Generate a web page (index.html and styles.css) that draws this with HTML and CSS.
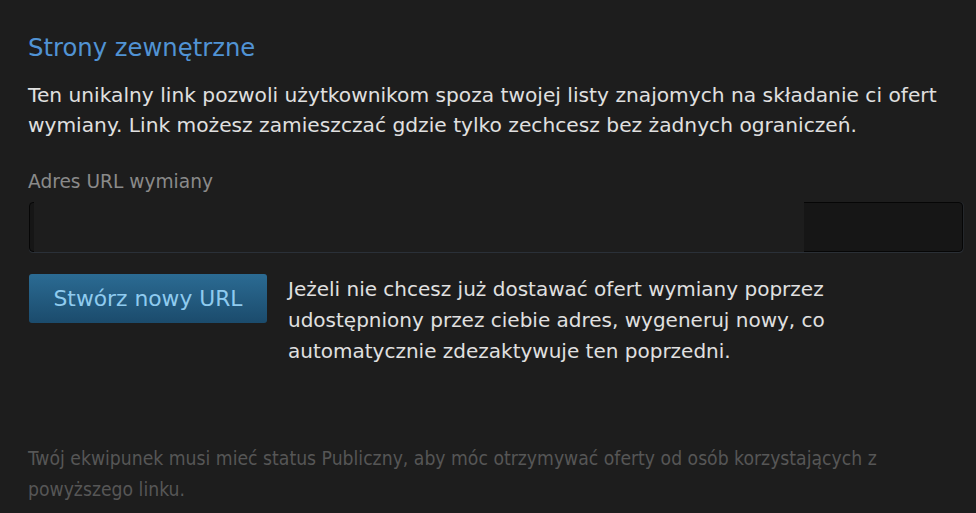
FILE: index.html
```html
<!DOCTYPE html>
<html lang="pl">
<head>
<meta charset="utf-8">
<title>Strony zewnętrzne</title>
<link rel="stylesheet" href="styles.css">
</head>
<body>
<div class="page">
  <h2 class="title">Strony zewnętrzne</h2>
  <p class="desc">Ten unikalny link pozwoli użytkownikom spoza twojej listy znajomych na składanie ci ofert wymiany. Link możesz zamieszczać gdzie tylko zechcesz bez żadnych ograniczeń.</p>
  <div class="label">Adres URL wymiany</div>
  <div class="field">
    <div class="input"></div>
    <div class="cover"></div>
  </div>
  <div class="row">
    <button class="btn">Stwórz nowy URL</button>
    <p class="note">Jeżeli nie chcesz już dostawać ofert wymiany poprzez udostępniony przez ciebie adres, wygeneruj nowy, co automatycznie zdezaktywuje ten poprzedni.</p>
  </div>
  <p class="foot">Twój ekwipunek musi mieć status Publiczny, aby móc otrzymywać oferty od osób korzystających z powyższego linku.</p>
</div>
</body>
</html>
```
FILE: styles.css
```css
html, body {
  margin: 0;
  padding: 0;
  background: #1d1d1d;
}
.page {
  padding: 30px 13px 0 28px;
  font-family: "DejaVu Sans", "Noto Sans", sans-serif;
}
.title {
  margin: 0;
  font-weight: normal;
  font-size: 24.3px;
  line-height: 36px;
  color: #5193d4;
}
.desc {
  margin: 14px 0 0;
  width: 935px;
  font-size: 20.2px;
  line-height: 30px;
  color: #e0e0e0;
}
.label {
  margin-top: 30px;
  font-size: 18.6px;
  line-height: 24px;
  color: #8a8a8a;
}
.field {
  position: relative;
  margin-top: 8px;
  height: 50px;
}
.input {
  height: 48px;
  margin-left: 1px;
  border: 1px solid #060606;
  border-radius: 4px;
  background: #161616;
  box-shadow: 0 1px 0 #2a2f35, 1px 0 0 #24272b;
}
.cover {
  position: absolute;
  left: 6px;
  top: 0;
  width: 770px;
  height: 50px;
  background: #1d1d1d;
  border-bottom: 1px solid #2a3038;
}
.row {
  display: flex;
  align-items: flex-start;
  gap: 21px;
  margin-top: 22px;
}
.btn {
  flex: none;
  width: 238px;
  height: 49px;
  margin-left: 1px;
  border: none;
  border-radius: 3px;
  background: linear-gradient(to bottom, #2b6b93 0%, #1b4b6c 100%);
  color: #8fcbef;
  font-family: "DejaVu Sans", "Noto Sans", sans-serif;
  font-size: 21.8px;
  padding: 0;
}
.note {
  margin: 0;
  width: 600px;
  font-size: 20px;
  line-height: 31px;
  color: #e0e0e0;
}
.foot {
  margin: 76px 0 0;
  font-family: "DejaVu Sans Condensed", "DejaVu Sans", sans-serif;
  font-stretch: condensed;
  font-size: 19.2px;
  line-height: 31px;
  color: #565656;
  width: 900px;
}
```
